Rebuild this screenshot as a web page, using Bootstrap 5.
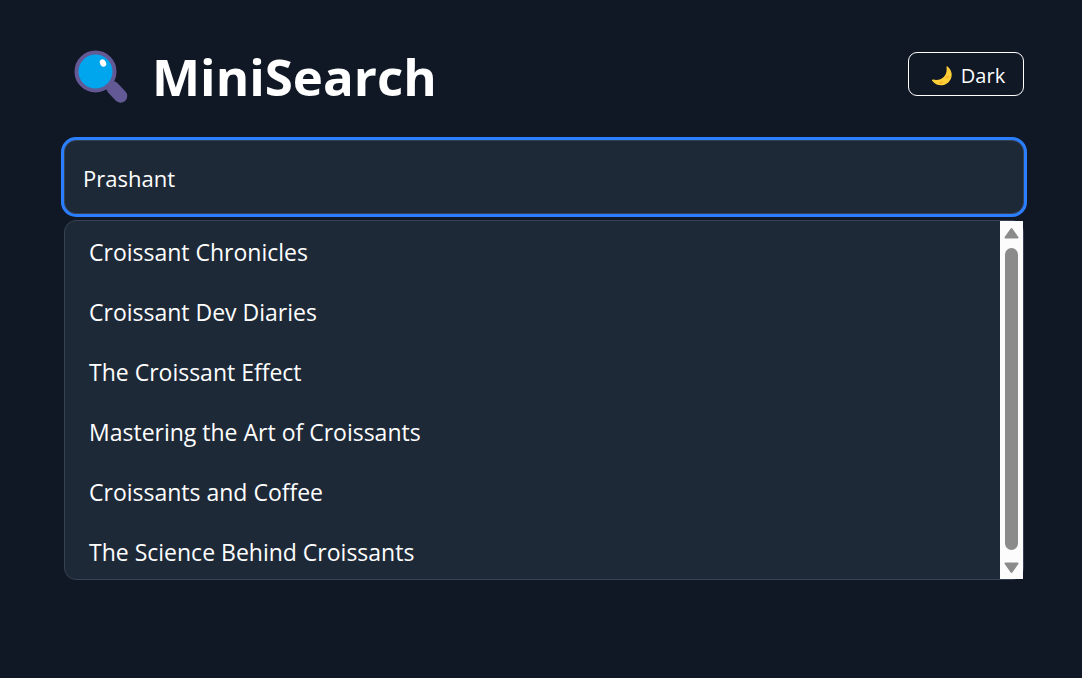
<!DOCTYPE html>
<html lang="en" data-bs-theme="dark">
<head>
<meta charset="utf-8">
<meta name="viewport" content="width=device-width, initial-scale=1">
<title>MiniSearch</title>
<link href="https://cdn.jsdelivr.net/npm/bootstrap@5.3.0/dist/css/bootstrap.min.css" rel="stylesheet">
<style>
  body { background: #101725; color: #fff; font-family: "Open Sans", "Noto Sans", sans-serif; }
  .page { padding: 44px 58px 0 64px; }
  .brand-title { font-size: 51px; font-weight: 700; line-height: 64px; }
  .brand-icon { width: 54px; height: 56px; margin-left: 10px; }
  .theme-btn { --bs-btn-color: #fff; --bs-btn-border-color: #fff; width: 116px; height: 44px; padding: 3px 0 0 4px; border-radius: 9px; font-size: 20px; line-height: 24px; }
  .search-box, .search-box:focus { height: 74px; padding: 2px 18px 0; border: 1px solid #364153; border-radius: 12px; background: #1e2938; color: #fff; font-size: 22px; box-shadow: 0 0 0 3px #2b7fff; }
  .results { margin-top: 6px; height: 360px; border: 1px solid #364153; border-radius: 12px; background: #1e2938; }
  .result-link { height: 60px; padding: 2px 24px 0; color: #fff; font-size: 23px; }
  .scroll-rail { width: 23px; background: #fcfcfc; padding: 6px 0 5px; }
  .scroll-thumb { width: 13px; margin: 9px 0 12px; background: #8b8b8b; border-radius: 7px; }
</style>
</head>
<body>
<main class="page">
  <header class="d-flex align-items-start justify-content-between mb-4 pb-2">
    <div class="d-flex align-items-center gap-4">
      <svg class="brand-icon" viewBox="0 -2 54 56" aria-hidden="true">
        <path d="M39 38L46.500 46" stroke="#635994" stroke-width="13.500" stroke-linecap="round"/>
        <path d="M30 30L39 39" stroke="#635994" stroke-width="5"/>
        <circle cx="21.500" cy="21.500" r="19" fill="#00a6ed" stroke="#635994" stroke-width="4"/>
        <ellipse cx="29" cy="13" rx="3" ry="3.800" fill="#fff" transform="rotate(-25 29 13)"/>
      </svg>
      <h1 class="brand-title mb-0">MiniSearch</h1>
    </div>
    <button type="button" class="btn theme-btn d-flex align-items-center justify-content-center gap-2 mt-2">
      <svg width="22" height="22" viewBox="0 0 22 22" aria-hidden="true">
        <path d="M16.500 1.500C20.500 4.500 22 10 19.500 14.500C16 21.500 6 22.500 1.200 15.800C.7 15 1.200 14.300 2.200 14.600C10.500 16.500 16.800 10.500 15.500 2.300C15.300 1.300 15.900 1 16.500 1.500Z" fill="#ffcf38"/>
        <path d="M15.500 12.500l2-1M9 18l2-.5" stroke="#f5b52c" stroke-width="2" stroke-linecap="round"/>
      </svg>
      <span>Dark</span>
    </button>
  </header>
  <input type="text" class="form-control search-box" value="Prashant" aria-label="Search">
  <div class="results d-flex">
    <ul class="list-unstyled mb-0 flex-grow-1 overflow-hidden">
      <li><a href="#" class="result-link d-flex align-items-center text-decoration-none">Croissant Chronicles</a></li>
      <li><a href="#" class="result-link d-flex align-items-center text-decoration-none">Croissant Dev Diaries</a></li>
      <li><a href="#" class="result-link d-flex align-items-center text-decoration-none">The Croissant Effect</a></li>
      <li><a href="#" class="result-link d-flex align-items-center text-decoration-none">Mastering the Art of Croissants</a></li>
      <li><a href="#" class="result-link d-flex align-items-center text-decoration-none">Croissants and Coffee</a></li>
      <li><a href="#" class="result-link d-flex align-items-center text-decoration-none">The Science Behind Croissants</a></li>
    </ul>
    <div class="scroll-rail d-flex flex-column align-items-center flex-shrink-0" aria-hidden="true">
      <svg class="flex-shrink-0" width="15" height="12" viewBox="0 0 15 12"><path d="M7.500 2L13.500 10.500H1.500Z" fill="#8b8b8b" stroke="#8b8b8b" stroke-width="2" stroke-linejoin="round"/></svg>
      <div class="scroll-thumb flex-grow-1"></div>
      <svg class="flex-shrink-0" width="15" height="12" viewBox="0 0 15 12"><path d="M7.500 10L13.500 1.500H1.500Z" fill="#8b8b8b" stroke="#8b8b8b" stroke-width="2" stroke-linejoin="round"/></svg>
    </div>
  </div>
</main>
<script src="https://cdn.jsdelivr.net/npm/bootstrap@5.3.0/dist/js/bootstrap.bundle.min.js"></script>
</body>
</html>
